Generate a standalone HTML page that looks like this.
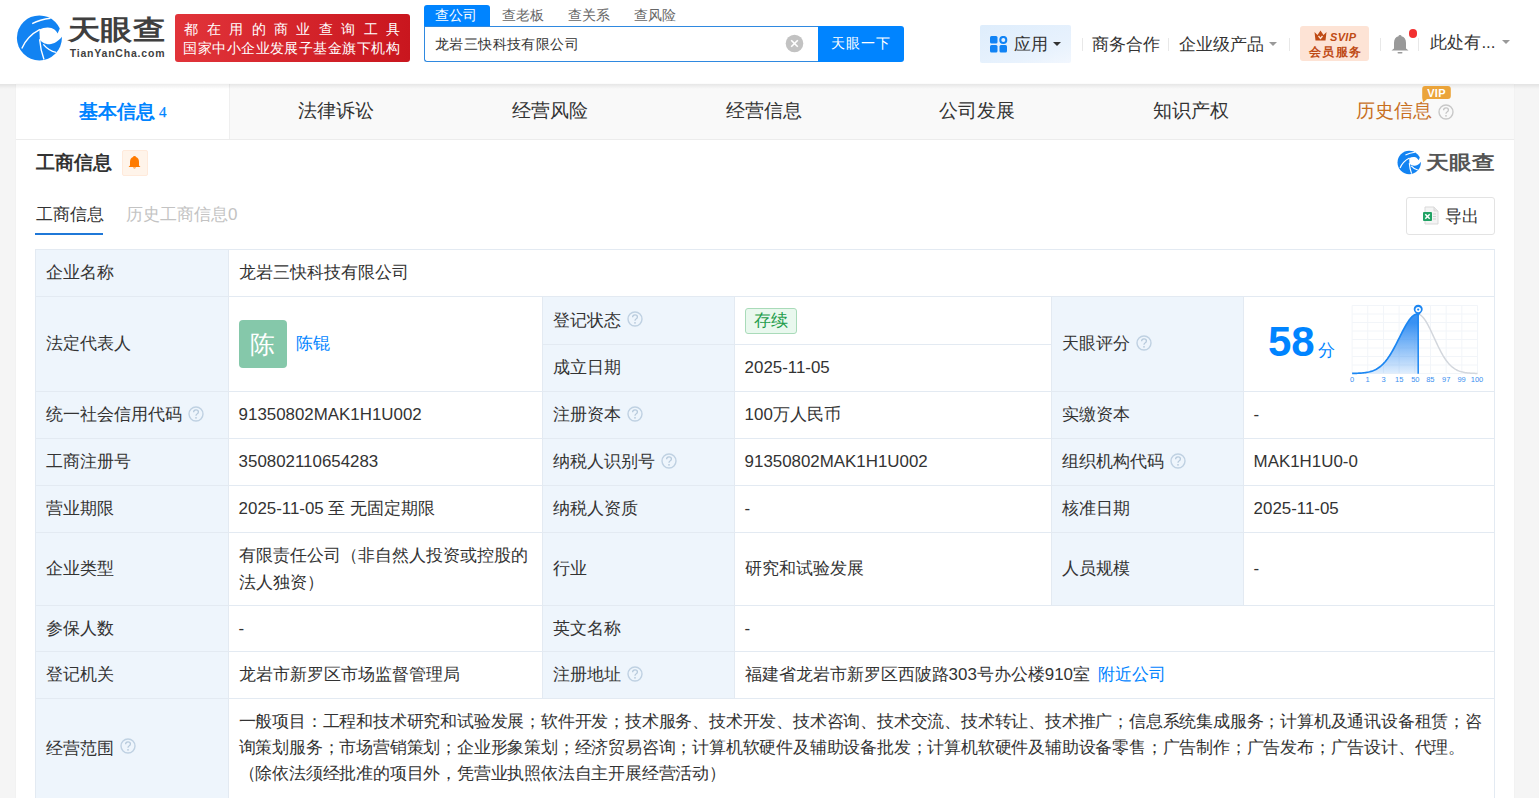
<!DOCTYPE html>
<html><head><meta charset="utf-8">
<style>
*{margin:0;padding:0;box-sizing:border-box}
html,body{width:1539px;height:798px;overflow:hidden;background:#f5f5f5;font-family:"Liberation Sans",sans-serif;color:#333}
.a{position:absolute;white-space:nowrap}
.cell{position:absolute;font-size:16.9px;line-height:20px;color:#333;white-space:nowrap;display:flex;align-items:center}
.q{display:block;flex:none;margin-left:5.5px;position:relative;top:-1.5px}
.sep{position:absolute;top:38px;width:1px;height:13px;background:#e8e8e8}
.car{position:absolute;width:0;height:0;border-left:4px solid transparent;border-right:4px solid transparent;border-top:4px solid #999}
</style></head>
<body>
<div class="a" style="left:0;top:0;width:1539px;height:84px;background:#fff;"></div>
<div class="a" style="left:16px;top:84px;width:1498px;height:714px;background:#fff;box-shadow:0 0 1px rgba(0,0,0,.08)"></div>

<svg class="a" style="left:14px;top:12px" width="52" height="52" viewBox="0 0 52 52"><circle cx="25.4" cy="25.9" r="22.5" fill="#1283f2"/>
  <path d="M25.4 17.6 C30 15 37 14.5 40.4 17.6 C42 19 43 20.5 43.6 21.5 L45.9 16.3 L51 16 L51 25 L47.9 24.8 C45 29 39 32.5 35.2 32.2 C31 32 27 30 25.8 27.4 Z" fill="#fff"/>
  <path d="M7.8 36.5 Q13 24 26 17.3" stroke="#fff" stroke-width="1.4" fill="none"/>
  <path d="M18.2 11.6 Q26 7.6 36.5 6.2" stroke="#fff" stroke-width="1.4" fill="none"/>
  <path d="M25.6 27.2 Q26.5 38 30 47.5" stroke="#fff" stroke-width="1.4" fill="none"/>
  <path d="M29.3 32.4 Q35 39 42 40.4" stroke="#fff" stroke-width="1.4" fill="none"/></svg>
<div class="a" style="left:68px;top:13px;font-size:26.5px;line-height:34px;font-weight:bold;color:#3f3f3f;transform-origin:0 0;transform:scaleX(1.2)">天眼查</div>
<div class="a" style="left:69.7px;top:46.5px;font-size:10.5px;line-height:13.65px;color:#3f3f3f;font-weight:bold;letter-spacing:0.8px;">TianYanCha.com</div>
<div class="a" style="left:175px;top:14px;width:235px;height:48px;border-radius:3px;background:linear-gradient(90deg,#e1343a,#c9161e)"></div>
<div class="a" style="left:184.3px;top:20.2px;width:216px;font-size:14px;line-height:18.2px;color:#fff;display:flex;justify-content:space-between"><span>都</span><span>在</span><span>用</span><span>的</span><span>商</span><span>业</span><span>查</span><span>询</span><span>工</span><span>具</span></div>
<div class="a" style="left:183.3px;top:39.45px;font-size:14px;line-height:18.2px;color:#fff;letter-spacing:0.45px;">国家中小企业发展子基金旗下机构</div>
<div class="a" style="left:424px;top:5px;width:66px;height:22px;background:#0084ff;border-radius:3px 3px 0 0"></div>
<div class="a" style="left:435.4px;top:6.0px;font-size:14px;line-height:18.2px;color:#fff;">查公司</div>
<div class="a" style="left:502px;top:6.0px;font-size:14px;line-height:18.2px;color:#666;">查老板</div>
<div class="a" style="left:567.8px;top:6.0px;font-size:14px;line-height:18.2px;color:#666;">查关系</div>
<div class="a" style="left:633.5px;top:6.0px;font-size:14px;line-height:18.2px;color:#666;">查风险</div>
<div class="a" style="left:424px;top:26px;width:396px;height:36px;border:1px solid #2f89e0;border-right:none;border-radius:0 0 0 3px;background:#fff"></div>
<div class="a" style="left:435px;top:35.0px;font-size:14px;line-height:18.2px;color:#333;letter-spacing:0.4px;">龙岩三快科技有限公司</div>
<svg class="a" style="left:785px;top:34px" width="19" height="19" viewBox="0 0 19 19"><circle cx="9.5" cy="9.5" r="8.8" fill="#c2c2c2"/><path d="M6.2 6.2 L12.8 12.8 M12.8 6.2 L6.2 12.8" stroke="#fff" stroke-width="1.6"/></svg>
<div class="a" style="left:818px;top:26px;width:86px;height:36px;background:#0084ff;border-radius:0 3px 3px 0"></div>
<div class="a" style="left:831px;top:34.35px;font-size:14px;line-height:18.2px;color:#fff;letter-spacing:0.9px;">天眼一下</div>
<div class="a" style="left:980px;top:25px;width:91px;height:38px;background:linear-gradient(160deg,#deedfc,#e8f2fd 70%,#f2f7fe);border-radius:2px"></div>
<svg class="a" style="left:990px;top:36px" width="18" height="17" viewBox="0 0 18 17">
  <rect x="0" y="0" width="7.5" height="7.5" rx="1.5" fill="#1083f5"/>
  <circle cx="13.3" cy="3.9" r="3" fill="none" stroke="#1083f5" stroke-width="2"/>
  <rect x="0" y="9" width="7.5" height="7.5" rx="1.5" fill="#1083f5"/>
  <rect x="9.5" y="9" width="7.5" height="7.5" rx="1.5" fill="#1083f5"/></svg>
<div class="a" style="left:1014px;top:34.3px;font-size:17px;line-height:22.1px;color:#333;">应用</div>
<div class="car" style="left:1053px;top:42px;border-top-color:#333"></div>
<div class="sep" style="left:1082px"></div>
<div class="a" style="left:1092px;top:34.05px;font-size:17px;line-height:22.1px;color:#333;">商务合作</div>
<div class="sep" style="left:1168px"></div>
<div class="a" style="left:1179.3px;top:33.9px;font-size:17px;line-height:22.1px;color:#333;">企业级产品</div>
<div class="car" style="left:1269px;top:42px"></div>
<div class="sep" style="left:1289px"></div>
<div class="a" style="left:1300px;top:26px;width:69px;height:35px;background:#fde3d5;border-radius:3px"></div>
<svg class="a" style="left:1314px;top:30px" width="13" height="11" viewBox="0 0 13 11"><path d="M0.5 2 L3.5 5 L6.5 0.5 L9.5 5 L12.5 2 L11.5 10.5 L1.5 10.5 Z" fill="#bf4a14"/><path d="M4.5 6 L6.5 8.5 L8.5 6" stroke="#fde3d5" stroke-width="1.3" fill="none"/></svg>
<div class="a" style="left:1330px;top:29.55px;font-size:11px;line-height:14.3px;color:#bf4a14;font-weight:bold;font-style:italic;letter-spacing:0.3px;">SVIP</div>
<div class="a" style="left:1309.3px;top:44.85px;font-size:12px;line-height:15.6px;color:#bf4a14;font-weight:bold;letter-spacing:1.2px;">会员服务</div>
<div class="sep" style="left:1380px"></div>
<svg class="a" style="left:1391px;top:34px" width="18" height="21" viewBox="0 0 18 21"><path d="M9 1 Q10.5 1 10.5 2.3 Q15 3.5 15 9 L15 14.5 L17.5 16.5 L0.5 16.5 L3 14.5 L3 9 Q3 3.5 7.5 2.3 Q7.5 1 9 1 Z" fill="#999"/><rect x="6.5" y="18" width="5" height="1.6" rx="0.8" fill="#999"/></svg>
<div class="a" style="left:1409px;top:29.3px;width:8.4px;height:8.4px;border-radius:50%;background:#f23030"></div>
<div class="sep" style="left:1418px"></div>
<div class="a" style="left:1430.4px;top:31.9px;font-size:17px;line-height:22.1px;color:#333;">此处有...</div>
<div class="car" style="left:1502px;top:40px"></div>
<div class="a" style="left:16px;top:84px;width:1498px;height:56px;background:#f9f9f9;border-bottom:1px solid #ececec"></div>
<div class="a" style="left:16px;top:84px;width:213.60px;height:55px;background:#fff;border-right:1px solid #efefef"></div>
<div class="a" style="left:0;top:84px;width:1539px;height:5px;background:linear-gradient(rgba(0,0,0,0.075),rgba(0,0,0,0))"></div>
<div class="a" style="left:78.7px;top:99.95px;font-size:19px;line-height:24.7px;color:#0084ff;font-weight:bold;">基本信息</div>
<div class="a" style="left:159px;top:101px;font-family:'Liberation Serif',serif;font-size:15px;line-height:22px;color:#0084ff;-webkit-text-stroke:0.25px #0084ff">4</div>
<div class="a" style="left:298.30px;top:99.35px;font-size:19px;line-height:24.7px;color:#333">法律诉讼</div>
<div class="a" style="left:511.90px;top:99.35px;font-size:19px;line-height:24.7px;color:#333">经营风险</div>
<div class="a" style="left:725.50px;top:99.35px;font-size:19px;line-height:24.7px;color:#333">经营信息</div>
<div class="a" style="left:939.10px;top:99.35px;font-size:19px;line-height:24.7px;color:#333">公司发展</div>
<div class="a" style="left:1152.70px;top:99.35px;font-size:19px;line-height:24.7px;color:#333">知识产权</div>
<div class="a" style="left:1355.5px;top:99.35px;font-size:19px;line-height:24.7px;color:#c8701f">历史信息</div>
<svg class="a" style="left:1437.5px;top:103.5px" width="16" height="16" viewBox="0 0 16 16"><circle cx="8" cy="8" r="7" fill="none" stroke="#c8c8c8" stroke-width="1.4"/><path d="M5.6 6.2 Q5.6 3.9 8 3.9 Q10.4 3.9 10.4 6 Q10.4 7.3 9 8 Q8 8.5 8 9.7" fill="none" stroke="#c4c4c4" stroke-width="1.3"/><circle cx="8" cy="11.8" r="0.9" fill="#c4c4c4"/></svg>
<svg class="a" style="left:1422px;top:86px" width="30" height="18" viewBox="0 0 30 18"><path d="M3 0 H25.8 Q28.8 0 28.8 3 V10 Q28.8 13 25.8 13 H5 L1.2 16.5 L0.2 12 V3 Q0.2 0 3 0 Z" fill="#eba43a"/><text x="14.5" y="10.8" text-anchor="middle" font-family="Liberation Sans, sans-serif" font-weight="bold" font-size="11" fill="#fff" letter-spacing="0.3">VIP</text></svg>
<div class="a" style="left:35.9px;top:150.75px;font-size:19px;line-height:24.7px;color:#333;font-weight:bold;">工商信息</div>
<div class="a" style="left:122px;top:150px;width:26px;height:26px;background:#fff4ea;border:1px solid #ffeadb;border-radius:2px"></div>
<svg class="a" style="left:127px;top:155px" width="15" height="15" viewBox="0 0 15 15"><path d="M7.5 1 Q9 1 9 2 Q12 3 12 7 L12 10.5 L13.5 12 L1.5 12 L3 10.5 L3 7 Q3 3 6 2 Q6 1 7.5 1 Z M5.8 12.5 Q7.5 14.5 9.2 12.5 Z" fill="#ff7b00"/></svg>
<svg class="a" style="left:1396px;top:148.5px" width="27" height="27" viewBox="0 0 52 52"><circle cx="25.4" cy="25.9" r="22.5" fill="#1283f2"/>
  <path d="M25.4 17.6 C30 15 37 14.5 40.4 17.6 C42 19 43 20.5 43.6 21.5 L45.9 16.3 L51 16 L51 25 L47.9 24.8 C45 29 39 32.5 35.2 32.2 C31 32 27 30 25.8 27.4 Z" fill="#fff"/>
  <path d="M7.8 36.5 Q13 24 26 17.3" stroke="#fff" stroke-width="2.2" fill="none"/>
  <path d="M18.2 11.6 Q26 7.6 36.5 6.2" stroke="#fff" stroke-width="2.2" fill="none"/>
  <path d="M25.6 27.2 Q26.5 38 30 47.5" stroke="#fff" stroke-width="2.2" fill="none"/>
  <path d="M29.3 32.4 Q35 39 42 40.4" stroke="#fff" stroke-width="2.2" fill="none"/></svg>
<div class="a" style="left:1426px;top:150px;font-size:19px;line-height:25px;font-weight:bold;color:#555;transform-origin:0 0;transform:scaleX(1.2)">天眼查</div>
<div class="a" style="left:35.7px;top:203.75px;font-size:17px;line-height:22.1px;color:#333;">工商信息</div>
<div class="a" style="left:35px;top:233px;width:68px;height:2px;background:#1f78d8"></div>
<div class="a" style="left:126px;top:203.75px;font-size:17px;line-height:22.1px;color:#c3c3c3;">历史工商信息0</div>
<div class="a" style="left:1406px;top:197px;width:89px;height:38px;border:1px solid #e3e3e3;border-radius:3px;background:#fff"></div>
<svg class="a" style="left:1422px;top:206px" width="18" height="19" viewBox="0 0 18 19"><path d="M3 1 L12 1 L16 5 L16 18 L3 18 Z" fill="#f4f4f4" stroke="#d9d9d9" stroke-width="1"/><path d="M12 1 L12 5 L16 5" fill="#e6e6e6" stroke="#d9d9d9" stroke-width="1"/><path d="M11 8 H14 M11 10.5 H14 M11 13 H14" stroke="#cfcfcf" stroke-width="1"/><rect x="1" y="6" width="9" height="9" rx="1" fill="#20a264"/><path d="M3.3 8.2 L7.7 12.8 M7.7 8.2 L3.3 12.8" stroke="#fff" stroke-width="1.5"/></svg>
<div class="a" style="left:1445px;top:205.8px;font-size:17px;line-height:22.1px;color:#333;">导出</div>
<div class="cell" style="left:35px;top:249px;width:194px;height:48px;background:#eef5fc;border:1px solid #e3eaf2;padding-left:10.2px;">企业名称</div>
<div class="cell" style="left:228px;top:249px;width:1267px;height:48px;background:#fff;border:1px solid #e3eaf2;padding-left:9.6px;">龙岩三快科技有限公司</div>
<div class="cell" style="left:35px;top:296px;width:194px;height:96px;background:#eef5fc;border:1px solid #e3eaf2;padding-left:10.2px;">法定代表人</div>
<div class="cell" style="left:228px;top:296px;width:315px;height:96px;background:#fff;border:1px solid #e3eaf2;padding-left:9.6px;"><span style="display:inline-block;width:48px;height:48px;border-radius:4px;background:#85c8aa;color:#fff;font-size:25px;line-height:48px;text-align:center">陈</span><span style="color:#0084ff;margin-left:9px">陈锟</span></div>
<div class="cell" style="left:542px;top:296px;width:193px;height:49px;background:#eef5fc;border:1px solid #e3eaf2;padding-left:10.2px;">登记状态<svg class="q" width="16" height="16" viewBox="0 0 16 16"><circle cx="8" cy="8" r="7" fill="none" stroke="#bfd1e2" stroke-width="1.4"/><path d="M5.6 6.2 Q5.6 3.9 8 3.9 Q10.4 3.9 10.4 6 Q10.4 7.3 9 8 Q8 8.5 8 9.7" fill="none" stroke="#b7cadc" stroke-width="1.3"/><circle cx="8" cy="11.8" r="0.9" fill="#b7cadc"/></svg></div>
<div class="cell" style="left:734px;top:296px;width:318px;height:49px;background:#fff;border:1px solid #e3eaf2;padding-left:9.6px;"><span style="display:inline-block;height:26px;padding:0 8px;border:1px solid #a9dbb9;background:#e9f8ee;border-radius:3px;color:#1f9d4c;line-height:24px">存续</span></div>
<div class="cell" style="left:542px;top:344px;width:193px;height:48px;background:#eef5fc;border:1px solid #e3eaf2;padding-left:10.2px;">成立日期</div>
<div class="cell" style="left:734px;top:344px;width:318px;height:48px;background:#fff;border:1px solid #e3eaf2;padding-left:9.6px;">2025-11-05</div>
<div class="cell" style="left:1051px;top:296px;width:193px;height:96px;background:#eef5fc;border:1px solid #e3eaf2;padding-left:10.2px;">天眼评分<svg class="q" width="16" height="16" viewBox="0 0 16 16"><circle cx="8" cy="8" r="7" fill="none" stroke="#bfd1e2" stroke-width="1.4"/><path d="M5.6 6.2 Q5.6 3.9 8 3.9 Q10.4 3.9 10.4 6 Q10.4 7.3 9 8 Q8 8.5 8 9.7" fill="none" stroke="#b7cadc" stroke-width="1.3"/><circle cx="8" cy="11.8" r="0.9" fill="#b7cadc"/></svg></div>
<div class="cell" style="left:1243px;top:296px;width:252px;height:96px;background:#fff;border:1px solid #e3eaf2;padding-left:9.6px;"></div>
<div class="cell" style="left:35px;top:391px;width:194px;height:48px;background:#eef5fc;border:1px solid #e3eaf2;padding-left:10.2px;">统一社会信用代码<svg class="q" width="16" height="16" viewBox="0 0 16 16"><circle cx="8" cy="8" r="7" fill="none" stroke="#bfd1e2" stroke-width="1.4"/><path d="M5.6 6.2 Q5.6 3.9 8 3.9 Q10.4 3.9 10.4 6 Q10.4 7.3 9 8 Q8 8.5 8 9.7" fill="none" stroke="#b7cadc" stroke-width="1.3"/><circle cx="8" cy="11.8" r="0.9" fill="#b7cadc"/></svg></div>
<div class="cell" style="left:228px;top:391px;width:315px;height:48px;background:#fff;border:1px solid #e3eaf2;padding-left:9.6px;">91350802MAK1H1U002</div>
<div class="cell" style="left:542px;top:391px;width:193px;height:48px;background:#eef5fc;border:1px solid #e3eaf2;padding-left:10.2px;">注册资本<svg class="q" width="16" height="16" viewBox="0 0 16 16"><circle cx="8" cy="8" r="7" fill="none" stroke="#bfd1e2" stroke-width="1.4"/><path d="M5.6 6.2 Q5.6 3.9 8 3.9 Q10.4 3.9 10.4 6 Q10.4 7.3 9 8 Q8 8.5 8 9.7" fill="none" stroke="#b7cadc" stroke-width="1.3"/><circle cx="8" cy="11.8" r="0.9" fill="#b7cadc"/></svg></div>
<div class="cell" style="left:734px;top:391px;width:318px;height:48px;background:#fff;border:1px solid #e3eaf2;padding-left:9.6px;">100万人民币</div>
<div class="cell" style="left:1051px;top:391px;width:193px;height:48px;background:#eef5fc;border:1px solid #e3eaf2;padding-left:10.2px;">实缴资本</div>
<div class="cell" style="left:1243px;top:391px;width:252px;height:48px;background:#fff;border:1px solid #e3eaf2;padding-left:9.6px;">-</div>
<div class="cell" style="left:35px;top:438px;width:194px;height:48px;background:#eef5fc;border:1px solid #e3eaf2;padding-left:10.2px;">工商注册号</div>
<div class="cell" style="left:228px;top:438px;width:315px;height:48px;background:#fff;border:1px solid #e3eaf2;padding-left:9.6px;">350802110654283</div>
<div class="cell" style="left:542px;top:438px;width:193px;height:48px;background:#eef5fc;border:1px solid #e3eaf2;padding-left:10.2px;">纳税人识别号<svg class="q" width="16" height="16" viewBox="0 0 16 16"><circle cx="8" cy="8" r="7" fill="none" stroke="#bfd1e2" stroke-width="1.4"/><path d="M5.6 6.2 Q5.6 3.9 8 3.9 Q10.4 3.9 10.4 6 Q10.4 7.3 9 8 Q8 8.5 8 9.7" fill="none" stroke="#b7cadc" stroke-width="1.3"/><circle cx="8" cy="11.8" r="0.9" fill="#b7cadc"/></svg></div>
<div class="cell" style="left:734px;top:438px;width:318px;height:48px;background:#fff;border:1px solid #e3eaf2;padding-left:9.6px;">91350802MAK1H1U002</div>
<div class="cell" style="left:1051px;top:438px;width:193px;height:48px;background:#eef5fc;border:1px solid #e3eaf2;padding-left:10.2px;">组织机构代码<svg class="q" width="16" height="16" viewBox="0 0 16 16"><circle cx="8" cy="8" r="7" fill="none" stroke="#bfd1e2" stroke-width="1.4"/><path d="M5.6 6.2 Q5.6 3.9 8 3.9 Q10.4 3.9 10.4 6 Q10.4 7.3 9 8 Q8 8.5 8 9.7" fill="none" stroke="#b7cadc" stroke-width="1.3"/><circle cx="8" cy="11.8" r="0.9" fill="#b7cadc"/></svg></div>
<div class="cell" style="left:1243px;top:438px;width:252px;height:48px;background:#fff;border:1px solid #e3eaf2;padding-left:9.6px;">MAK1H1U0-0</div>
<div class="cell" style="left:35px;top:485px;width:194px;height:48px;background:#eef5fc;border:1px solid #e3eaf2;padding-left:10.2px;">营业期限</div>
<div class="cell" style="left:228px;top:485px;width:315px;height:48px;background:#fff;border:1px solid #e3eaf2;padding-left:9.6px;">2025-11-05 至 无固定期限</div>
<div class="cell" style="left:542px;top:485px;width:193px;height:48px;background:#eef5fc;border:1px solid #e3eaf2;padding-left:10.2px;">纳税人资质</div>
<div class="cell" style="left:734px;top:485px;width:318px;height:48px;background:#fff;border:1px solid #e3eaf2;padding-left:9.6px;">-</div>
<div class="cell" style="left:1051px;top:485px;width:193px;height:48px;background:#eef5fc;border:1px solid #e3eaf2;padding-left:10.2px;">核准日期</div>
<div class="cell" style="left:1243px;top:485px;width:252px;height:48px;background:#fff;border:1px solid #e3eaf2;padding-left:9.6px;">2025-11-05</div>
<div class="cell" style="left:35px;top:532px;width:194px;height:74px;background:#eef5fc;border:1px solid #e3eaf2;padding-left:10.2px;">企业类型</div>
<div class="cell" style="left:228px;top:532px;width:315px;height:74px;background:#fff;border:1px solid #e3eaf2;padding-left:9.6px;"><div style="line-height:27px">有限责任公司（非自然人投资或控股的<br>法人独资）</div></div>
<div class="cell" style="left:542px;top:532px;width:193px;height:74px;background:#eef5fc;border:1px solid #e3eaf2;padding-left:10.2px;">行业</div>
<div class="cell" style="left:734px;top:532px;width:318px;height:74px;background:#fff;border:1px solid #e3eaf2;padding-left:9.6px;">研究和试验发展</div>
<div class="cell" style="left:1051px;top:532px;width:193px;height:74px;background:#eef5fc;border:1px solid #e3eaf2;padding-left:10.2px;">人员规模</div>
<div class="cell" style="left:1243px;top:532px;width:252px;height:74px;background:#fff;border:1px solid #e3eaf2;padding-left:9.6px;">-</div>
<div class="cell" style="left:35px;top:605px;width:194px;height:47px;background:#eef5fc;border:1px solid #e3eaf2;padding-left:10.2px;">参保人数</div>
<div class="cell" style="left:228px;top:605px;width:315px;height:47px;background:#fff;border:1px solid #e3eaf2;padding-left:9.6px;">-</div>
<div class="cell" style="left:542px;top:605px;width:193px;height:47px;background:#eef5fc;border:1px solid #e3eaf2;padding-left:10.2px;">英文名称</div>
<div class="cell" style="left:734px;top:605px;width:761px;height:47px;background:#fff;border:1px solid #e3eaf2;padding-left:9.6px;">-</div>
<div class="cell" style="left:35px;top:651px;width:194px;height:48px;background:#eef5fc;border:1px solid #e3eaf2;padding-left:10.2px;">登记机关</div>
<div class="cell" style="left:228px;top:651px;width:315px;height:48px;background:#fff;border:1px solid #e3eaf2;padding-left:9.6px;">龙岩市新罗区市场监督管理局</div>
<div class="cell" style="left:542px;top:651px;width:193px;height:48px;background:#eef5fc;border:1px solid #e3eaf2;padding-left:10.2px;">注册地址<svg class="q" width="16" height="16" viewBox="0 0 16 16"><circle cx="8" cy="8" r="7" fill="none" stroke="#bfd1e2" stroke-width="1.4"/><path d="M5.6 6.2 Q5.6 3.9 8 3.9 Q10.4 3.9 10.4 6 Q10.4 7.3 9 8 Q8 8.5 8 9.7" fill="none" stroke="#b7cadc" stroke-width="1.3"/><circle cx="8" cy="11.8" r="0.9" fill="#b7cadc"/></svg></div>
<div class="cell" style="left:734px;top:651px;width:761px;height:48px;background:#fff;border:1px solid #e3eaf2;padding-left:9.6px;">福建省龙岩市新罗区西陂路303号办公楼910室<span style="color:#0084ff;margin-left:8px">附近公司</span></div>
<div class="cell" style="left:35px;top:698px;width:194px;height:133px;background:#eef5fc;border:1px solid #e3eaf2;padding-left:10.2px;align-items:flex-start;padding-top:40px">经营范围<svg class="q" width="16" height="16" viewBox="0 0 16 16"><circle cx="8" cy="8" r="7" fill="none" stroke="#bfd1e2" stroke-width="1.4"/><path d="M5.6 6.2 Q5.6 3.9 8 3.9 Q10.4 3.9 10.4 6 Q10.4 7.3 9 8 Q8 8.5 8 9.7" fill="none" stroke="#b7cadc" stroke-width="1.3"/><circle cx="8" cy="11.8" r="0.9" fill="#b7cadc"/></svg></div>
<div class="cell" style="left:228px;top:698px;width:1267px;height:133px;background:#fff;border:1px solid #e3eaf2;padding-left:9.6px;align-items:flex-start"><div style="line-height:26.2px;padding-top:9.5px;letter-spacing:-0.2px">一般项目：工程和技术研究和试验发展；软件开发；技术服务、技术开发、技术咨询、技术交流、技术转让、技术推广；信息系统集成服务；计算机及通讯设备租赁；咨<br>询策划服务；市场营销策划；企业形象策划；经济贸易咨询；计算机软硬件及辅助设备批发；计算机软硬件及辅助设备零售；广告制作；广告发布；广告设计、代理。<br>（除依法须经批准的项目外，凭营业执照依法自主开展经营活动）</div></div>
<div class="a" style="left:1268px;top:314.9px;font-size:42px;line-height:54.6px;color:#0084ff;font-weight:bold;">58</div>
<div class="a" style="left:1318px;top:340.4px;font-size:17px;line-height:22.1px;color:#0084ff;">分</div>
<svg class="a" style="left:1345px;top:298px" width="145" height="92" viewBox="0 0 145 92">
<defs><linearGradient id="gf" x1="0" y1="0" x2="0" y2="1"><stop offset="0.15" stop-color="#2f8cf2" stop-opacity="0.95"/><stop offset="1" stop-color="#2f8cf2" stop-opacity="0.15"/></linearGradient></defs>
<path d="M7.10 7.5V75.5M22.77 7.5V75.5M38.45 7.5V75.5M54.13 7.5V75.5M69.80 7.5V75.5M85.47 7.5V75.5M101.15 7.5V75.5M116.83 7.5V75.5M132.50 7.5V75.5M7.1 7.50H132.5M7.1 16.00H132.5M7.1 24.50H132.5M7.1 33.00H132.5M7.1 41.50H132.5M7.1 50.00H132.5M7.1 58.50H132.5M7.1 67.00H132.5M7.1 75.50H132.5" stroke="#f2f5f9" stroke-width="1" fill="none"/>
<polygon points="7.10,75.42 8.20,75.40 9.30,75.37 10.40,75.35 11.51,75.31 12.61,75.27 13.71,75.21 14.81,75.15 15.91,75.08 17.02,74.99 18.12,74.88 19.22,74.76 20.32,74.61 21.42,74.44 22.52,74.24 23.62,74.01 24.73,73.75 25.83,73.44 26.93,73.09 28.03,72.69 29.13,72.24 30.23,71.73 31.34,71.15 32.44,70.51 33.54,69.79 34.64,69.00 35.74,68.12 36.85,67.15 37.95,66.09 39.05,64.94 40.15,63.69 41.25,62.34 42.35,60.89 43.46,59.34 44.56,57.70 45.66,55.96 46.76,54.13 47.86,52.22 48.96,50.24 50.07,48.18 51.17,46.07 52.27,43.92 53.37,41.73 54.47,39.53 55.57,37.33 56.68,35.14 57.78,32.99 58.88,30.89 59.98,28.86 61.08,26.93 62.18,25.10 63.29,23.40 64.39,21.84 65.49,20.44 66.59,19.22 67.69,18.18 68.79,17.35 69.89,16.72 71.00,16.31 72.10,16.11 73.20,16.15 73.2,75.5" fill="url(#gf)"/>
<polyline points="7.10,75.42 8.20,75.40 9.30,75.37 10.40,75.35 11.51,75.31 12.61,75.27 13.71,75.21 14.81,75.15 15.91,75.08 17.02,74.99 18.12,74.88 19.22,74.76 20.32,74.61 21.42,74.44 22.52,74.24 23.62,74.01 24.73,73.75 25.83,73.44 26.93,73.09 28.03,72.69 29.13,72.24 30.23,71.73 31.34,71.15 32.44,70.51 33.54,69.79 34.64,69.00 35.74,68.12 36.85,67.15 37.95,66.09 39.05,64.94 40.15,63.69 41.25,62.34 42.35,60.89 43.46,59.34 44.56,57.70 45.66,55.96 46.76,54.13 47.86,52.22 48.96,50.24 50.07,48.18 51.17,46.07 52.27,43.92 53.37,41.73 54.47,39.53 55.57,37.33 56.68,35.14 57.78,32.99 58.88,30.89 59.98,28.86 61.08,26.93 62.18,25.10 63.29,23.40 64.39,21.84 65.49,20.44 66.59,19.22 67.69,18.18 68.79,17.35 69.89,16.72 71.00,16.31 72.10,16.11 73.20,16.15" stroke="#1b86f2" stroke-width="1.7" fill="none" stroke-linejoin="round"/>
<polyline points="73.20,16.15 74.19,16.41 75.18,16.88 76.17,17.55 77.15,18.42 78.14,19.47 79.13,20.71 80.12,22.11 81.11,23.66 82.09,25.34 83.08,27.14 84.07,29.05 85.06,31.04 86.05,33.10 87.04,35.21 88.03,37.35 89.01,39.50 90.00,41.66 90.99,43.80 91.98,45.91 92.97,47.98 93.95,49.99 94.94,51.95 95.93,53.83 96.92,55.63 97.91,57.35 98.90,58.98 99.89,60.52 100.87,61.96 101.86,63.31 102.85,64.56 103.84,65.72 104.83,66.78 105.81,67.76 106.80,68.66 107.79,69.47 108.78,70.20 109.77,70.87 110.76,71.46 111.75,71.99 112.73,72.46 113.72,72.88 114.71,73.25 115.70,73.57 116.69,73.85 117.68,74.10 118.66,74.31 119.65,74.50 120.64,74.66 121.63,74.79 122.62,74.91 123.60,75.01 124.59,75.09 125.58,75.16 126.57,75.22 127.56,75.27 128.55,75.31 129.53,75.35 130.52,75.38 131.51,75.40 132.50,75.42" stroke="#d3d7dd" stroke-width="1.5" fill="none"/>
<path d="M73.2 16 V75.8" stroke="#1b86f2" stroke-width="1.5"/>
<path d="M73.2 18 L70.0 14.3 A4.5 4.5 0 1 1 76.4 14.3 Z" fill="#1b86f2"/>
<circle cx="73.2" cy="11.6" r="2.7" fill="#fff"/><circle cx="73.2" cy="11.6" r="1.1" fill="#1b86f2"/>
<g fill="#3a8ff0" font-size="7.5" font-family="Liberation Sans, sans-serif" text-anchor="middle"><text x="7.1" y="84.3">0</text><text x="22.5" y="84.3">1</text><text x="38.6" y="84.3">3</text><text x="54.2" y="84.3">15</text><text x="70.3" y="84.3">50</text><text x="85.3" y="84.3">85</text><text x="101.2" y="84.3">97</text><text x="116.6" y="84.3">99</text><text x="132" y="84.3">100</text></g>
</svg>
</body></html>
